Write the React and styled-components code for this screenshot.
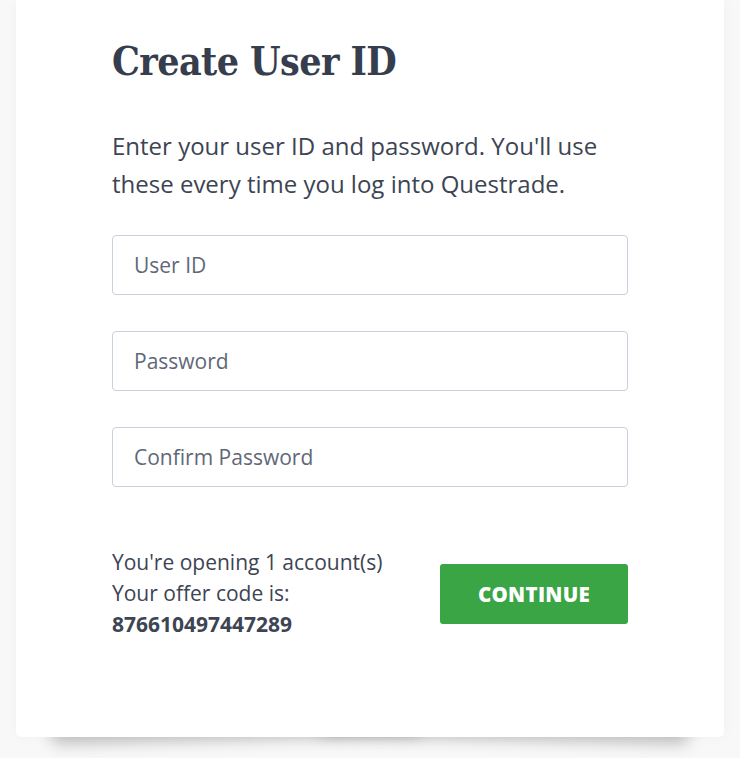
import React from 'react';
import styled, { createGlobalStyle } from 'styled-components';

const GlobalStyle = createGlobalStyle`
  html {
    background: #f8f8f8;
  }
  body {
    margin: 0;
    font-family: "Open Sans", "Noto Sans", sans-serif;
    color: #3d4453;
  }
`;

const Page = styled.div`
  padding: 0 16px 22px;
`;

const Card = styled.div`
  position: relative;
  background: #fff;
  border-radius: 0 0 5px 5px;
  padding: 37px 96px 97px;
  box-shadow: 0 0 14px rgba(0, 0, 0, 0.035);

  &::before,
  &::after {
    content: '';
    position: absolute;
    z-index: -1;
    bottom: 12px;
    width: 52%;
    height: 20px;
    box-shadow: 0 14px 16px rgba(0, 0, 0, 0.24);
  }
  &::before {
    left: 36px;
    transform: rotate(-1.5deg);
  }
  &::after {
    right: 36px;
    transform: rotate(1.5deg);
  }
`;

const Title = styled.h1`
  margin: 0;
  font-family: "DejaVu Serif Condensed", "DejaVu Serif", serif;
  font-stretch: condensed;
  font-weight: bold;
  font-size: 39px;
  line-height: 48px;
  color: #363e4e;
  letter-spacing: -0.6px;
`;

const Intro = styled.p`
  margin: 42px 0 32px;
  font-size: 24px;
  line-height: 38px;
  color: #3d4453;
`;

const Form = styled.div`
  display: flex;
  flex-direction: column;
  gap: 36px;
`;

const Field = styled.input`
  box-sizing: border-box;
  width: 100%;
  height: 60px;
  padding: 0 21px;
  border: 1px solid #c9d1dc;
  border-radius: 4px;
  font-family: "Open Sans", sans-serif;
  font-size: 21px;
  color: #3d4453;
  outline: none;

  &::placeholder {
    color: #5f6878;
  }
`;

const Footer = styled.div`
  display: flex;
  align-items: center;
  justify-content: space-between;
  margin-top: 60px;
`;

const Summary = styled.div`
  font-size: 21px;
  line-height: 31px;
  color: #3d4453;
`;

const Code = styled.div`
  font-weight: bold;
`;

const Button = styled.button`
  width: 188px;
  height: 60px;
  border: none;
  border-radius: 3px;
  background: #3aa545;
  color: #fff;
  font-family: "Open Sans", sans-serif;
  font-weight: 800;
  font-size: 20.5px;
  letter-spacing: 0.3px;
  cursor: pointer;
`;

export default function App() {
  return (
    <Page>
      <GlobalStyle />
      <Card>
        <Title>Create User ID</Title>
        <Intro>
          Enter your user ID and password. You'll use these every time you log into Questrade.
        </Intro>
        <Form>
          <Field placeholder="User ID" />
          <Field type="password" placeholder="Password" />
          <Field type="password" placeholder="Confirm Password" />
        </Form>
        <Footer>
          <Summary>
            <div>You're opening 1 account(s)</div>
            <div>Your offer code is:</div>
            <Code>876610497447289</Code>
          </Summary>
          <Button>CONTINUE</Button>
        </Footer>
      </Card>
    </Page>
  );
}
